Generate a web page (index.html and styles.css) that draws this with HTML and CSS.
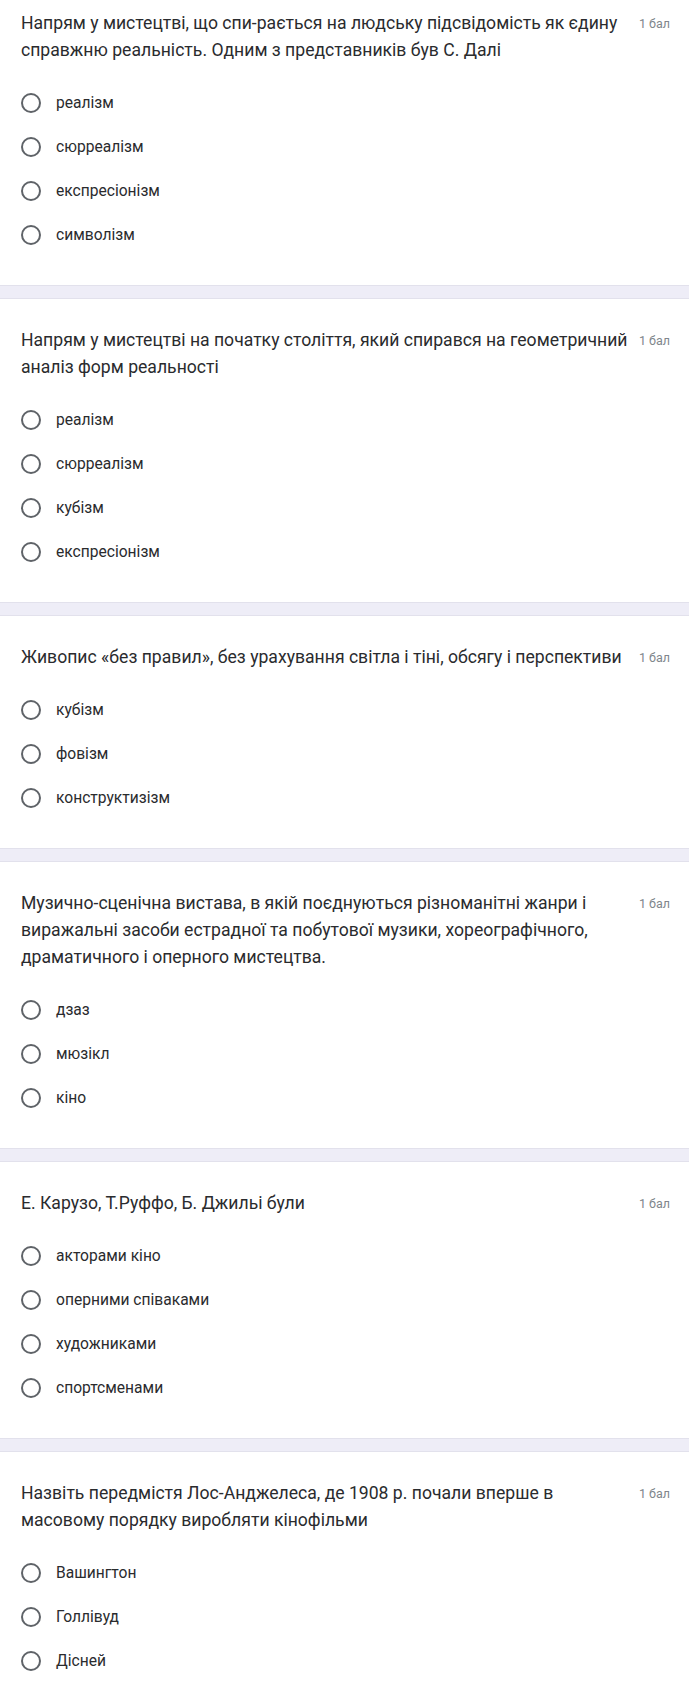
FILE: index.html
```html
<!DOCTYPE html>
<html lang="uk">
<head>
<meta charset="utf-8">
<title>Тест</title>
<link rel="stylesheet" href="styles.css">
</head>
<body>
<main class="form">
  <section class="q q-first">
    <div class="q-head">
      <div class="q-title">Напрям у мистецтві, що спи-рається на людську підсвідомість як єдину справжню реальність. Одним з представників був С. Далі</div>
      <div class="q-points">1 бал</div>
    </div>
    <ul class="opts">
      <li class="opt"><span class="radio"></span><span class="opt-label">реалізм</span></li>
      <li class="opt"><span class="radio"></span><span class="opt-label">сюрреалізм</span></li>
      <li class="opt"><span class="radio"></span><span class="opt-label">експресіонізм</span></li>
      <li class="opt"><span class="radio"></span><span class="opt-label">символізм</span></li>
    </ul>
  </section>
  <div class="divider"></div>
  <section class="q">
    <div class="q-head">
      <div class="q-title">Напрям у мистецтві на початку століття, який спирався на геометричний аналіз форм реальності</div>
      <div class="q-points">1 бал</div>
    </div>
    <ul class="opts">
      <li class="opt"><span class="radio"></span><span class="opt-label">реалізм</span></li>
      <li class="opt"><span class="radio"></span><span class="opt-label">сюрреалізм</span></li>
      <li class="opt"><span class="radio"></span><span class="opt-label">кубізм</span></li>
      <li class="opt"><span class="radio"></span><span class="opt-label">експресіонізм</span></li>
    </ul>
  </section>
  <div class="divider"></div>
  <section class="q">
    <div class="q-head">
      <div class="q-title">Живопис «без правил», без урахування світла і тіні, обсягу і перспективи</div>
      <div class="q-points">1 бал</div>
    </div>
    <ul class="opts">
      <li class="opt"><span class="radio"></span><span class="opt-label">кубізм</span></li>
      <li class="opt"><span class="radio"></span><span class="opt-label">фовізм</span></li>
      <li class="opt"><span class="radio"></span><span class="opt-label">конструктизізм</span></li>
    </ul>
  </section>
  <div class="divider"></div>
  <section class="q">
    <div class="q-head">
      <div class="q-title">Музично-сценічна вистава, в якій поєднуються різноманітні жанри і виражальні засоби естрадної та побутової музики, хореографічного, драматичного і оперного мистецтва.</div>
      <div class="q-points">1 бал</div>
    </div>
    <ul class="opts">
      <li class="opt"><span class="radio"></span><span class="opt-label">дзаз</span></li>
      <li class="opt"><span class="radio"></span><span class="opt-label">мюзікл</span></li>
      <li class="opt"><span class="radio"></span><span class="opt-label">кіно</span></li>
    </ul>
  </section>
  <div class="divider"></div>
  <section class="q">
    <div class="q-head">
      <div class="q-title">Е. Карузо, Т.Руффо, Б. Джильі були</div>
      <div class="q-points">1 бал</div>
    </div>
    <ul class="opts">
      <li class="opt"><span class="radio"></span><span class="opt-label">акторами кіно</span></li>
      <li class="opt"><span class="radio"></span><span class="opt-label">оперними співаками</span></li>
      <li class="opt"><span class="radio"></span><span class="opt-label">художниками</span></li>
      <li class="opt"><span class="radio"></span><span class="opt-label">спортсменами</span></li>
    </ul>
  </section>
  <div class="divider"></div>
  <section class="q">
    <div class="q-head">
      <div class="q-title">Назвіть передмістя Лос-Анджелеса, де 1908 р. почали вперше в масовому порядку виробляти кінофільми</div>
      <div class="q-points">1 бал</div>
    </div>
    <ul class="opts">
      <li class="opt"><span class="radio"></span><span class="opt-label">Вашингтон</span></li>
      <li class="opt"><span class="radio"></span><span class="opt-label">Голлівуд</span></li>
      <li class="opt"><span class="radio"></span><span class="opt-label">Дісней</span></li>
    </ul>
  </section>
</main>
</body>
</html>
```
FILE: styles.css
```css
html, body {
  margin: 0;
  padding: 0;
  background: #ffffff;
}
body {
  font-family: Roboto, "Noto Sans", "Liberation Sans", sans-serif;
  color: #202124;
}
.form {
  display: flex;
  flex-direction: column;
}
.q {
  padding: 28px 19px 28px 21px;
}
.q-first {
  padding-top: 10px;
}
.q-head {
  display: flex;
  align-items: flex-start;
}
.q-title {
  flex: 1;
  font-size: 17.6px;
  line-height: 27px;
  color: #2a2b2e;
}
.q-points {
  flex: none;
  margin-left: 10px;
  font-size: 12.5px;
  line-height: 27px;
  color: #80868b;
}
.opts {
  list-style: none;
  margin: 17px 0 0;
  padding: 0;
}
.opt {
  display: flex;
  align-items: center;
  height: 44px;
}
.radio {
  box-sizing: border-box;
  width: 20px;
  height: 20px;
  border: 2px solid #5f6368;
  border-radius: 50%;
  flex: none;
}
.opt-label {
  margin-left: 15px;
  font-size: 15.6px;
  color: #2a2b2e;
}
.divider {
  height: 12px;
  background: #eeedf7;
  border-top: 1px solid #e2e1ec;
  border-bottom: 1px solid #e2e1ec;
}
```
